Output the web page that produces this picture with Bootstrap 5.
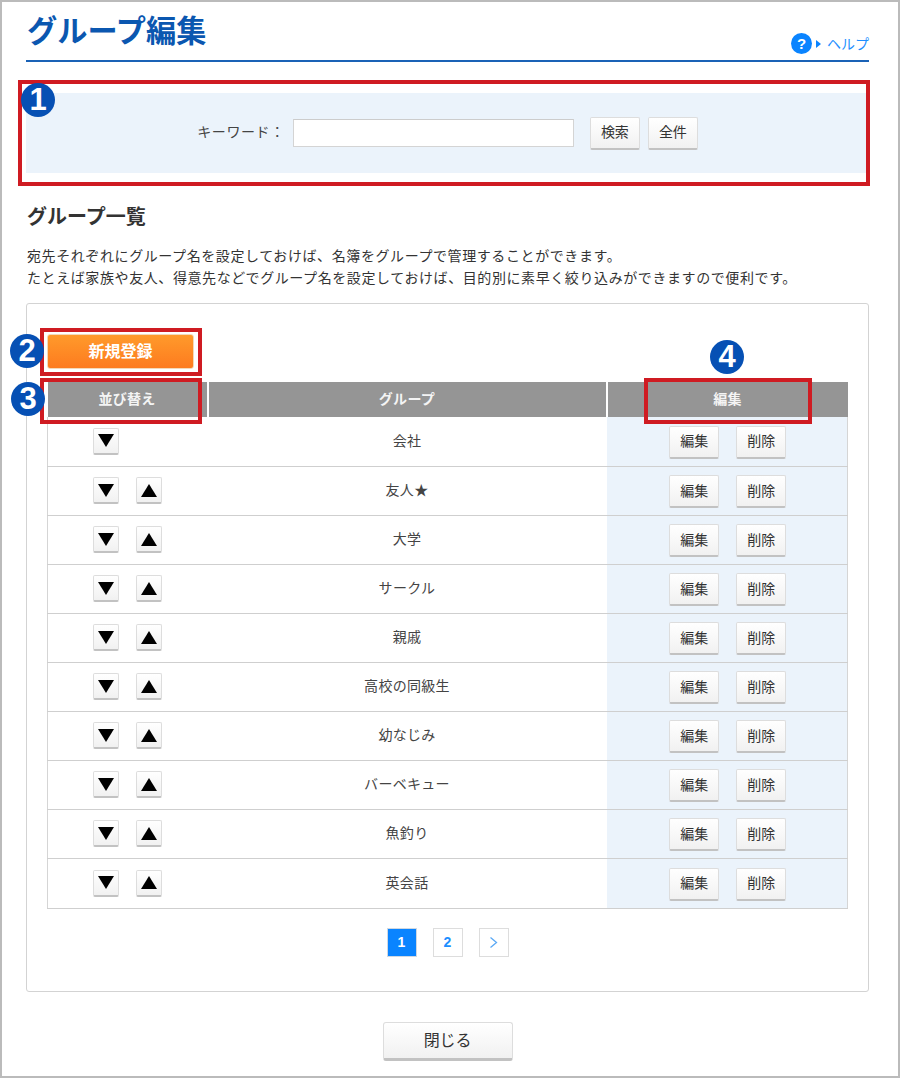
<!DOCTYPE html>
<html lang="ja">
<head>
<meta charset="utf-8">
<title>グループ編集</title>
<link href="https://cdn.jsdelivr.net/npm/bootstrap@5.3.0/dist/css/bootstrap.min.css" rel="stylesheet">
<style>
html,body{margin:0;padding:0;background:#fff}
body{font-family:"Liberation Sans","Noto Sans CJK JP",sans-serif;color:#333;font-size:14px}
.sheet{position:relative;width:900px;height:1078px;border:2px solid #bbb;padding:0 29px 0 24px;overflow:hidden}
.page-head{height:60px;border-bottom:2px solid #1a62b6}
.page-title{margin:0 0 0 1px;padding-top:4px;padding-bottom:9px;font-size:30.2px;line-height:38px;font-weight:700;color:#0b57b0}
.help-link{color:#1e8fff;font-size:14px;line-height:20px;text-decoration:none;margin-bottom:6px}
.help-icon{width:21px;height:21px;border-radius:50%;background:#0a84ff;color:#fff;font-weight:700;font-size:15px;line-height:21px;text-align:center;font-family:"Liberation Sans",sans-serif}
.help-caret{width:0;height:0;border-left:5px solid #0a84ff;border-top:4px solid transparent;border-bottom:4px solid transparent;margin:0 6px 0 4px}
.search-panel{height:80px;margin-top:31px;background:#ebf3fb;gap:8px}
.search-label{color:#444;font-size:14px;letter-spacing:.6px;margin:0 0 2px}
.search-box{width:281px;height:28px;border:1px solid #d4d4d4;border-top-color:#ccc;background:#fff;margin-right:8px}
.soft-btn{display:inline-flex;align-items:center;justify-content:center;padding:0;background:linear-gradient(#fff,#f1f1f1);border:1px solid #ddd;border-bottom:2px solid #c2c2c2;border-radius:2px;color:#333;font-size:14px;letter-spacing:-.1px;width:50px;height:33px}
.section-title{margin:31px 0 0 1px;font-size:20px;line-height:26px;font-weight:700;color:#333}
.intro{margin:15px 0 0 1px;font-size:14px;letter-spacing:.59px;line-height:22px;color:#333}
.list-panel{margin-top:14px;height:689px;border:1px solid #d3d3d3;border-radius:3px;padding:30px 20px 0}
.add-btn{display:block;width:147px;height:35px;padding:0;background:linear-gradient(#ff9a2b,#fd7b1f);border:1px solid #f4d9b8;border-radius:3px;color:#fff;font-size:16px;font-weight:700;margin-bottom:13px}
.group-table{width:801px;table-layout:fixed;border-collapse:collapse;margin:0}
.group-table th{height:35px;padding:0;background:#959595;color:#f4f4f4;font-size:14px;letter-spacing:.3px;font-weight:700;text-align:center;vertical-align:middle;border-left:2px solid #fff;border-bottom:0}
.group-table th:first-child{border-left:0}
.group-table .c1{width:160px}
.group-table .c3{width:241px}
.group-table td{height:49px;padding:0;font-size:14px;letter-spacing:.3px;text-align:center;vertical-align:middle;color:#444;border-bottom:1px solid #cfcfcf;background:#fff}
.group-table tbody tr:last-child td{height:50px}
.group-table td:first-child{border-left:1px solid #d5d5d5}
.group-table td:last-child{background:#ebf3fb;border-right:1px solid #d5d5d5}
.sort-cell{padding-left:45px;gap:17px}
.arrow-btn{width:26px;height:27px;padding:0;display:inline-flex;align-items:center;justify-content:center;background:linear-gradient(#fff,#f1f1f1);border:1px solid #ddd;border-bottom:2px solid #c2c2c2;border-radius:2px}
.arrow-btn svg{width:16px;height:13px;display:block}
.edit-cell{gap:17px;padding:2px 0 0 2px}
.pager{margin-top:19px;gap:16px}
.pager-item{width:30px;height:29px;display:flex;align-items:center;justify-content:center;border:1px solid #ddd;color:#1e8fff;font-size:14px;font-weight:700;text-decoration:none;background:#fff}
.pager-item.is-current{background:#0a84ff;color:#fff;border-color:#cfd8e2}
.pager-item svg{width:9px;height:13px}
.close-row{margin-top:30px}
.close-btn{width:130px;height:39px;font-size:16px;border-radius:3px;border-bottom-width:3px}
.callout{position:absolute;border:4px solid #cf1b22;pointer-events:none}
.call-a{left:16px;top:78px;width:852px;height:106px}
.call-b{left:38px;top:326px;width:162px;height:48px}
.call-c{left:38px;top:376px;width:162px;height:46px}
.call-d{left:642px;top:376px;width:168px;height:46px}
.num{position:absolute;width:34px;height:34px;border-radius:50%;background:#0650b4;color:#fff;font-family:"Liberation Sans",sans-serif;font-weight:700;font-size:31px;line-height:34px;text-align:center}
.num-a{left:19px;top:81px}
.num-b{left:8px;top:332px}
.num-c{left:9px;top:380px}
.num-d{left:708px;top:338px}
</style>
</head>
<body>
<div class="sheet">
  <header class="page-head d-flex justify-content-between align-items-end">
    <h1 class="page-title">グループ編集</h1>
    <a href="#" class="help-link d-flex align-items-center"><span class="help-icon">?</span><span class="help-caret"></span>ヘルプ</a>
  </header>

  <form class="search-panel d-flex align-items-center justify-content-center">
    <label class="search-label">キーワード：</label>
    <input type="text" class="search-box">
    <button type="button" class="soft-btn">検索</button>
    <button type="button" class="soft-btn">全件</button>
  </form>

  <h2 class="section-title">グループ一覧</h2>
  <p class="intro">宛先それぞれにグループ名を設定しておけば、名簿をグループで管理することができます。<br>たとえば家族や友人、得意先などでグループ名を設定しておけば、目的別に素早く絞り込みができますので便利です。</p>

  <section class="list-panel">
    <button type="button" class="add-btn">新規登録</button>
    <table class="group-table">
      <thead><tr><th class="c1">並び替え</th><th>グループ</th><th class="c3">編集</th></tr></thead>
      <tbody>
        <tr><td><div class="sort-cell d-flex align-items-center"><button type="button" class="arrow-btn"><svg viewBox="0 0 16 13"><path d="M0 0H16L8 13Z"/></svg></button></div></td><td>会社</td><td><div class="edit-cell d-flex align-items-center justify-content-center"><button type="button" class="soft-btn">編集</button><button type="button" class="soft-btn">削除</button></div></td></tr>
        <tr><td><div class="sort-cell d-flex align-items-center"><button type="button" class="arrow-btn"><svg viewBox="0 0 16 13"><path d="M0 0H16L8 13Z"/></svg></button><button type="button" class="arrow-btn"><svg viewBox="0 0 16 13"><path d="M0 13H16L8 0Z"/></svg></button></div></td><td>友人★</td><td><div class="edit-cell d-flex align-items-center justify-content-center"><button type="button" class="soft-btn">編集</button><button type="button" class="soft-btn">削除</button></div></td></tr>
        <tr><td><div class="sort-cell d-flex align-items-center"><button type="button" class="arrow-btn"><svg viewBox="0 0 16 13"><path d="M0 0H16L8 13Z"/></svg></button><button type="button" class="arrow-btn"><svg viewBox="0 0 16 13"><path d="M0 13H16L8 0Z"/></svg></button></div></td><td>大学</td><td><div class="edit-cell d-flex align-items-center justify-content-center"><button type="button" class="soft-btn">編集</button><button type="button" class="soft-btn">削除</button></div></td></tr>
        <tr><td><div class="sort-cell d-flex align-items-center"><button type="button" class="arrow-btn"><svg viewBox="0 0 16 13"><path d="M0 0H16L8 13Z"/></svg></button><button type="button" class="arrow-btn"><svg viewBox="0 0 16 13"><path d="M0 13H16L8 0Z"/></svg></button></div></td><td>サークル</td><td><div class="edit-cell d-flex align-items-center justify-content-center"><button type="button" class="soft-btn">編集</button><button type="button" class="soft-btn">削除</button></div></td></tr>
        <tr><td><div class="sort-cell d-flex align-items-center"><button type="button" class="arrow-btn"><svg viewBox="0 0 16 13"><path d="M0 0H16L8 13Z"/></svg></button><button type="button" class="arrow-btn"><svg viewBox="0 0 16 13"><path d="M0 13H16L8 0Z"/></svg></button></div></td><td>親戚</td><td><div class="edit-cell d-flex align-items-center justify-content-center"><button type="button" class="soft-btn">編集</button><button type="button" class="soft-btn">削除</button></div></td></tr>
        <tr><td><div class="sort-cell d-flex align-items-center"><button type="button" class="arrow-btn"><svg viewBox="0 0 16 13"><path d="M0 0H16L8 13Z"/></svg></button><button type="button" class="arrow-btn"><svg viewBox="0 0 16 13"><path d="M0 13H16L8 0Z"/></svg></button></div></td><td>高校の同級生</td><td><div class="edit-cell d-flex align-items-center justify-content-center"><button type="button" class="soft-btn">編集</button><button type="button" class="soft-btn">削除</button></div></td></tr>
        <tr><td><div class="sort-cell d-flex align-items-center"><button type="button" class="arrow-btn"><svg viewBox="0 0 16 13"><path d="M0 0H16L8 13Z"/></svg></button><button type="button" class="arrow-btn"><svg viewBox="0 0 16 13"><path d="M0 13H16L8 0Z"/></svg></button></div></td><td>幼なじみ</td><td><div class="edit-cell d-flex align-items-center justify-content-center"><button type="button" class="soft-btn">編集</button><button type="button" class="soft-btn">削除</button></div></td></tr>
        <tr><td><div class="sort-cell d-flex align-items-center"><button type="button" class="arrow-btn"><svg viewBox="0 0 16 13"><path d="M0 0H16L8 13Z"/></svg></button><button type="button" class="arrow-btn"><svg viewBox="0 0 16 13"><path d="M0 13H16L8 0Z"/></svg></button></div></td><td>バーベキュー</td><td><div class="edit-cell d-flex align-items-center justify-content-center"><button type="button" class="soft-btn">編集</button><button type="button" class="soft-btn">削除</button></div></td></tr>
        <tr><td><div class="sort-cell d-flex align-items-center"><button type="button" class="arrow-btn"><svg viewBox="0 0 16 13"><path d="M0 0H16L8 13Z"/></svg></button><button type="button" class="arrow-btn"><svg viewBox="0 0 16 13"><path d="M0 13H16L8 0Z"/></svg></button></div></td><td>魚釣り</td><td><div class="edit-cell d-flex align-items-center justify-content-center"><button type="button" class="soft-btn">編集</button><button type="button" class="soft-btn">削除</button></div></td></tr>
        <tr><td><div class="sort-cell d-flex align-items-center"><button type="button" class="arrow-btn"><svg viewBox="0 0 16 13"><path d="M0 0H16L8 13Z"/></svg></button><button type="button" class="arrow-btn"><svg viewBox="0 0 16 13"><path d="M0 13H16L8 0Z"/></svg></button></div></td><td>英会話</td><td><div class="edit-cell d-flex align-items-center justify-content-center"><button type="button" class="soft-btn">編集</button><button type="button" class="soft-btn">削除</button></div></td></tr>
      </tbody>
    </table>
    <nav class="pager d-flex justify-content-center">
      <a href="#" class="pager-item is-current">1</a>
      <a href="#" class="pager-item">2</a>
      <a href="#" class="pager-item"><svg viewBox="0 0 9 13"><path d="M1.5 1.5L7.5 6.5L1.5 11.5" fill="none" stroke="#5aa9f5" stroke-width="1.3"/></svg></a>
    </nav>
  </section>

  <div class="close-row d-flex justify-content-center">
    <button type="button" class="soft-btn close-btn">閉じる</button>
  </div>

  <div class="callout call-a"></div>
  <div class="callout call-b"></div>
  <div class="callout call-c"></div>
  <div class="callout call-d"></div>
  <div class="num num-a">1</div>
  <div class="num num-b">2</div>
  <div class="num num-c">3</div>
  <div class="num num-d">4</div>
</div>
<script src="https://cdn.jsdelivr.net/npm/bootstrap@5.3.0/dist/js/bootstrap.bundle.min.js"></script>
</body>
</html>
